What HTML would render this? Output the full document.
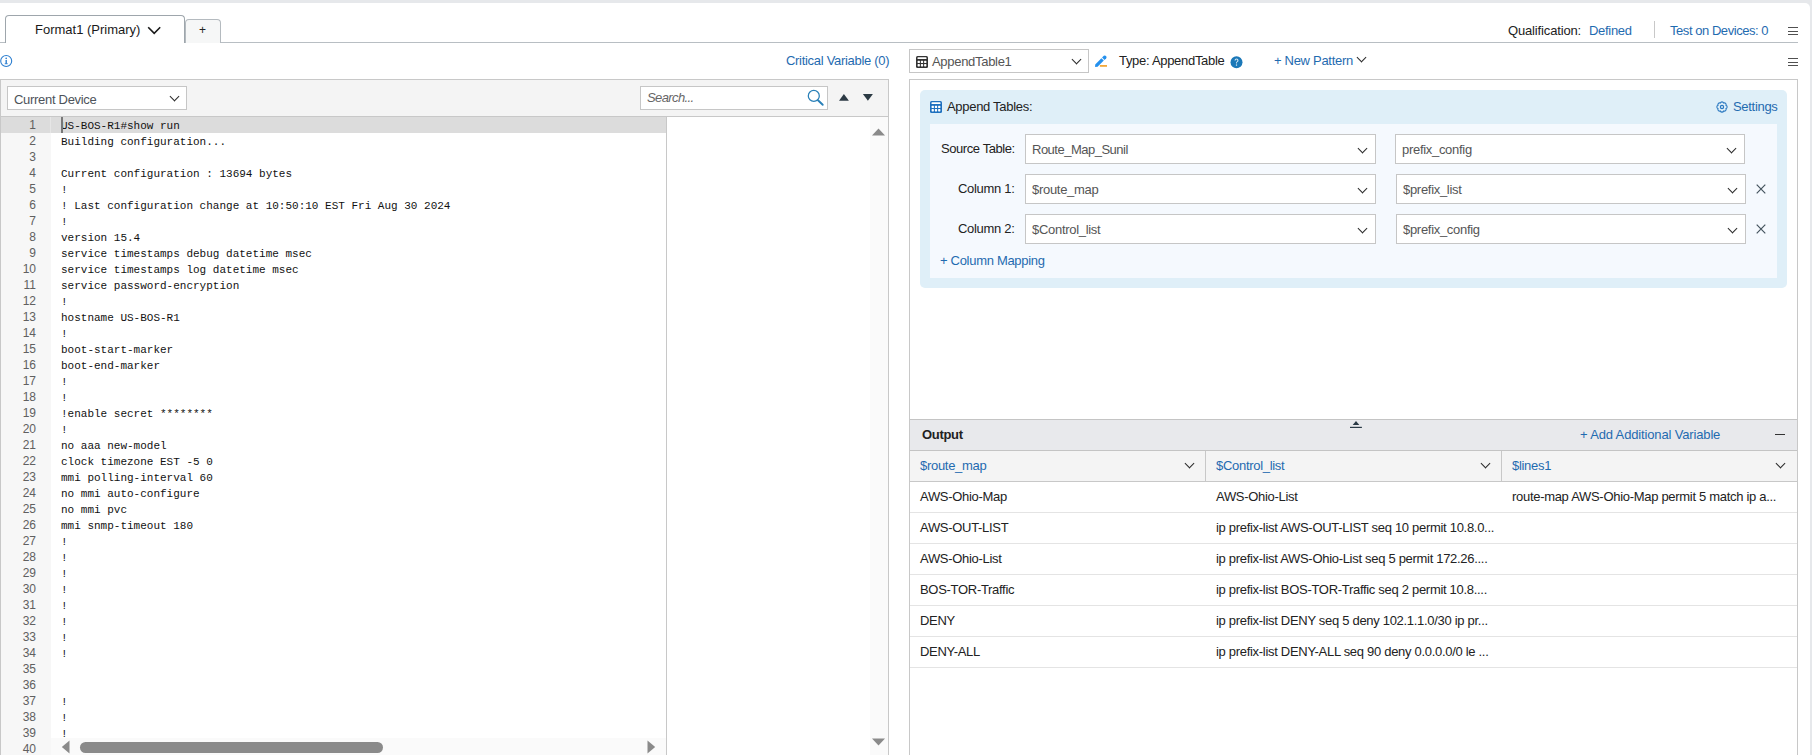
<!DOCTYPE html>
<html><head><meta charset="utf-8">
<style>
*{box-sizing:border-box;margin:0;padding:0}
html,body{width:1812px;height:755px;overflow:hidden;background:#e6e8eb;font-family:"Liberation Sans",sans-serif;font-size:13px;color:#222}
.abs{position:absolute}
.page{position:absolute;left:0;top:3px;width:1810px;height:760px;background:#fff;border-top-right-radius:5px}
.t{position:absolute;white-space:pre;line-height:16px;letter-spacing:-0.3px}
.blue{color:#1f6bb0}
.hl{position:absolute;background:#c9cdd1}
.box{position:absolute;background:#fff;border:1px solid #c6c6c6}
.chev{position:absolute;width:7px;height:7px;border-right:1.4px solid #333;border-bottom:1.4px solid #333;transform:rotate(45deg)}
.code{position:absolute;left:61px;top:117.5px;font-family:"Liberation Mono",monospace;font-size:11px;line-height:16px;color:#111;white-space:pre}
.gut{position:absolute;left:1px;top:117px;width:35px;font-family:"Liberation Sans",sans-serif;font-size:12px;line-height:16px;color:#606060;text-align:right;white-space:pre}
</style></head><body>
<div class="page"></div>

<!-- tabs -->
<div class="hl" style="left:0;top:42px;width:1798px;height:1px;background:#b8bec3"></div>
<div class="abs" style="left:5px;top:15px;width:180px;height:28px;background:#fff;border:1px solid #9ea6ac;border-bottom:none;border-radius:4px 4px 0 0"></div>
<div class="t" style="left:35px;top:22px;letter-spacing:0;color:#1a1a1a">Format1 (Primary)</div>
<svg class="abs" style="left:147px;top:26px" width="15" height="9" viewBox="0 0 15 9"><path d="M1.2 1.2 L7.2 7.4 L13.2 1.2" fill="none" stroke="#1a1a1a" stroke-width="1.6"/></svg>
<div class="abs" style="left:185px;top:19px;width:36px;height:24px;background:#f6f7f7;border:1px solid #b4babf;border-bottom:none;border-radius:4px 4px 0 0"></div>
<div class="t" style="left:199px;top:22px;font-size:12px;color:#222">+</div>

<div class="t" style="left:1508px;top:23px;letter-spacing:-0.15px">Qualification:</div>
<div class="t blue" style="left:1589px;top:23px">Defined</div>
<div class="hl" style="left:1654px;top:21px;width:1px;height:17px;background:#c8c8c8"></div>
<div class="t blue" style="left:1670px;top:23px;letter-spacing:-0.45px">Test on Devices: 0</div>
<div class="hl" style="left:1788px;top:27px;width:10px;height:1px;background:#505050"></div>
<div class="hl" style="left:1788px;top:30.5px;width:10px;height:1px;background:#505050"></div>
<div class="hl" style="left:1788px;top:34px;width:10px;height:1px;background:#505050"></div>

<!-- info icon -->
<svg class="abs" style="left:0;top:54px" width="14" height="14" viewBox="0 0 14 14"><circle cx="6.2" cy="7" r="5.5" fill="none" stroke="#2d7fd0" stroke-width="1.1"/><circle cx="6.2" cy="4.4" r="0.8" fill="#2d7fd0"/><rect x="5.5" y="6" width="1.4" height="3.8" fill="#2d7fd0"/><rect x="4.7" y="9.3" width="3" height="0.9" fill="#2d7fd0"/></svg>
<div class="t blue" style="left:786px;top:53px">Critical Variable (0)</div>

<!-- LEFT PANEL -->
<div class="abs" style="left:0;top:79px;width:889px;height:700px;border:1px solid #c8c8c8;background:#fff"></div>
<div class="abs" style="left:1px;top:80px;width:887px;height:37px;background:#f4f4f4;border-bottom:1px solid #c8c8c8"></div>

<!-- left toolbar -->
<div class="box" style="left:7px;top:86px;width:180px;height:24px"></div>
<div class="t" style="left:14px;top:92px;color:#4d535a">Current Device</div>
<div class="chev" style="left:171px;top:93px;width:7px;height:7px;border-width:1.5px;border-color:#2a2a2a"></div>
<div class="box" style="left:640px;top:86px;width:188px;height:24px"></div>
<div class="t" style="left:647px;top:90px;color:#666;font-style:italic;letter-spacing:-0.6px">Search...</div>
<svg class="abs" style="left:806px;top:89px" width="19" height="18" viewBox="0 0 19 18"><circle cx="7.8" cy="6.9" r="5.5" fill="none" stroke="#2a80b8" stroke-width="1.25"/><line x1="12" y1="11.2" x2="16.7" y2="15.8" stroke="#2a80b8" stroke-width="1.9" stroke-linecap="round"/></svg>
<svg class="abs" style="left:838px;top:93px" width="12" height="9" viewBox="0 0 12 9"><path d="M1 7.8 L5.9 1.1 L10.9 7.8Z" fill="#2c3a44"/></svg>
<svg class="abs" style="left:862px;top:93px" width="12" height="9" viewBox="0 0 12 9"><path d="M0.9 0.9 L5.9 7.8 L10.9 0.9Z" fill="#2c3a44"/></svg>

<!-- code editor -->
<div class="abs" style="left:1px;top:117px;width:50px;height:640px;background:#f7f7f7"></div>
<div class="abs" style="left:1px;top:117px;width:665px;height:16px;background:#dcdcdc"></div>
<div class="abs" style="left:50px;top:117px;width:1px;height:16px;background:#e6e6e6"></div>
<div class="abs" style="left:666px;top:117px;width:1px;height:640px;background:#c8c8c8"></div>
<div class="abs" style="left:870px;top:117px;width:18px;height:640px;background:#fafafa"></div>
<div class="gut">1
2
3
4
5
6
7
8
9
10
11
12
13
14
15
16
17
18
19
20
21
22
23
24
25
26
27
28
29
30
31
32
33
34
35
36
37
38
39
40</div>
<div class="code">US-BOS-R1#show run
Building configuration...

Current configuration : 13694 bytes
!
! Last configuration change at 10:50:10 EST Fri Aug 30 2024
!
version 15.4
service timestamps debug datetime msec
service timestamps log datetime msec
service password-encryption
!
hostname US-BOS-R1
!
boot-start-marker
boot-end-marker
!
!
!enable secret ********
!
no aaa new-model
clock timezone EST -5 0
mmi polling-interval 60
no mmi auto-configure
no mmi pvc
mmi snmp-timeout 180
!
!
!
!
!
!
!
!


!
!
!</div>
<div class="abs" style="left:61px;top:117px;width:2px;height:16px;background:#777"></div>
<svg class="abs" style="left:872px;top:128px" width="14" height="8" viewBox="0 0 14 8"><path d="M0 7.5 L6.5 0.5 L13 7.5Z" fill="#8a8a8a"/></svg>
<svg class="abs" style="left:872px;top:738px" width="14" height="8" viewBox="0 0 14 8"><path d="M0 0.5 L6.5 7.5 L13 0.5Z" fill="#8a8a8a"/></svg>
<div class="abs" style="left:51px;top:738px;width:615px;height:20px;background:#fafafa"></div>
<svg class="abs" style="left:61px;top:740px" width="9" height="15" viewBox="0 0 9 15"><path d="M8.5 0.5 L0.8 7 L8.5 13.5Z" fill="#8a8a8a"/></svg>
<svg class="abs" style="left:647px;top:740px" width="9" height="15" viewBox="0 0 9 15"><path d="M0.5 0.5 L8.2 7 L0.5 13.5Z" fill="#8a8a8a"/></svg>
<div class="abs" style="left:80px;top:742px;width:303px;height:11px;background:#8a8a8a;border-radius:6px"></div>

<!-- RIGHT PANEL top toolbar -->
<div class="box" style="left:909px;top:49px;width:180px;height:24px"></div>
<svg class="abs" style="left:916px;top:56px" width="12" height="12" viewBox="0 0 12 12"><rect x="0" y="0" width="12" height="12" rx="1.5" fill="#333"/><rect x="1.5" y="1.3" width="9" height="1.7" rx="0.6" fill="#fff"/><rect x="1.6" y="4.8" width="2.3" height="2.3" rx="0.6" fill="#fff"/><rect x="4.85" y="4.8" width="2.3" height="2.3" rx="0.6" fill="#fff"/><rect x="8.1" y="4.8" width="2.3" height="2.3" rx="0.6" fill="#fff"/><rect x="1.6" y="8.1" width="2.3" height="2.3" rx="0.6" fill="#fff"/><rect x="4.85" y="8.1" width="2.3" height="2.3" rx="0.6" fill="#fff"/><rect x="8.1" y="8.1" width="2.3" height="2.3" rx="0.6" fill="#fff"/></svg>
<div class="t" style="left:932px;top:54px;color:#555">AppendTable1</div>
<div class="chev" style="left:1073px;top:56px;width:7px;height:7px;border-width:1.5px;border-color:#2a2a2a"></div>
<svg class="abs" style="left:1094px;top:54px" width="14" height="14" viewBox="0 0 14 14"><path d="M1.1 12.9 L1.2 10.4 L7.4 4.2 L9.8 6.6 L3.6 12.8 Z" fill="#2490ee"/><path d="M8.1 3.5 L9.8 1.8 Q11 1 12.2 2.2 L12.2 2.2 Q13 3.3 12.2 4.2 L10.5 5.9 Z" fill="#2490ee"/><rect x="5.9" y="11" width="7.1" height="1.8" fill="#f2a93b"/></svg>
<div class="t" style="left:1119px;top:53px;color:#222">Type: AppendTable</div>
<svg class="abs" style="left:1229.5px;top:55.5px" width="13" height="13" viewBox="0 0 13 13"><circle cx="6.5" cy="6.3" r="6" fill="#1b78b8"/><path d="M4.5 4.6 Q4.6 2.6 6.5 2.6 Q8.5 2.6 8.5 4.4 Q8.5 5.5 7.4 6.1 Q6.9 6.5 6.9 7.4 L6 7.4 Q6 6.1 6.8 5.5 Q7.4 5 7.4 4.4 Q7.4 3.6 6.5 3.6 Q5.6 3.6 5.6 4.6 Z" fill="#d6e8f4"/><rect x="5.9" y="8.4" width="1.2" height="1.3" fill="#d6e8f4"/></svg>
<div class="t blue" style="left:1274px;top:53px">+ New Pattern</div>
<div class="chev" style="left:1358px;top:54px;width:7px;height:7px;border-width:1.5px;border-color:#2a2a2a"></div>
<div class="hl" style="left:1788px;top:58px;width:10px;height:1px;background:#505050"></div>
<div class="hl" style="left:1788px;top:61.5px;width:10px;height:1px;background:#505050"></div>
<div class="hl" style="left:1788px;top:65px;width:10px;height:1px;background:#505050"></div>

<div class="abs" style="left:909px;top:79px;width:889px;height:700px;border:1px solid #c8c8c8;background:#fff"></div>

<!-- append tables blue panel -->
<div class="abs" style="left:920px;top:90px;width:867px;height:198px;background:#dfeff8;border-radius:5px"></div>
<svg class="abs" style="left:930px;top:101px" width="12" height="12" viewBox="0 0 12 12"><rect x="0" y="0" width="12" height="12" rx="1.5" fill="#1e70bf"/><rect x="1.5" y="1.3" width="9" height="1.7" rx="0.6" fill="#fff"/><rect x="1.6" y="4.8" width="2.3" height="2.3" rx="0.6" fill="#fff"/><rect x="4.85" y="4.8" width="2.3" height="2.3" rx="0.6" fill="#fff"/><rect x="8.1" y="4.8" width="2.3" height="2.3" rx="0.6" fill="#fff"/><rect x="1.6" y="8.1" width="2.3" height="2.3" rx="0.6" fill="#fff"/><rect x="4.85" y="8.1" width="2.3" height="2.3" rx="0.6" fill="#fff"/><rect x="8.1" y="8.1" width="2.3" height="2.3" rx="0.6" fill="#fff"/></svg>
<div class="t" style="left:947px;top:99px;color:#222">Append Tables:</div>
<svg class="abs" style="left:1715px;top:100px" width="14" height="14" viewBox="0 0 14 14"><g fill="none" stroke="#2a78c0" stroke-width="1.1"><path d="M5.35 3.03 A1.75 1.75 0 0 1 8.65 3.03 A1.75 1.75 0 0 1 10.97 5.35 A1.75 1.75 0 0 1 10.97 8.65 A1.75 1.75 0 0 1 8.65 10.97 A1.75 1.75 0 0 1 5.35 10.97 A1.75 1.75 0 0 1 3.03 8.65 A1.75 1.75 0 0 1 3.03 5.35 A1.75 1.75 0 0 1 5.35 3.03 Z"/><circle cx="7" cy="7" r="1.6" stroke-width="1.2"/></g></svg>
<div class="t blue" style="left:1733px;top:99px">Settings</div>
<div class="abs" style="left:930px;top:124px;width:847px;height:154px;background:#f5f9fe"></div>

<div class="t" style="left:941px;top:141px;color:#222;letter-spacing:-0.42px">Source Table:</div>
<div class="box" style="left:1025px;top:134px;width:351px;height:30px"></div>
<div class="t" style="left:1032px;top:142px;color:#555;letter-spacing:-0.5px">Route_Map_Sunil</div>
<div class="chev" style="left:1359px;top:145px;width:7px;height:7px;border-width:1.5px;border-color:#2a2a2a"></div>
<div class="box" style="left:1395px;top:134px;width:350px;height:30px"></div>
<div class="t" style="left:1402px;top:142px;color:#555">prefix_config</div>
<div class="chev" style="left:1728px;top:145px;width:7px;height:7px;border-width:1.5px;border-color:#2a2a2a"></div>

<div class="t" style="left:958px;top:181px;color:#222">Column 1:</div>
<div class="box" style="left:1025px;top:174px;width:351px;height:30px"></div>
<div class="t" style="left:1032px;top:182px;color:#555">$route_map</div>
<div class="chev" style="left:1359px;top:185px;width:7px;height:7px;border-width:1.5px;border-color:#2a2a2a"></div>
<div class="box" style="left:1396px;top:174px;width:350px;height:30px"></div>
<div class="t" style="left:1403px;top:182px;color:#555">$prefix_list</div>
<div class="chev" style="left:1729px;top:185px;width:7px;height:7px;border-width:1.5px;border-color:#2a2a2a"></div>
<svg class="abs" style="left:1756px;top:184px" width="10" height="10" viewBox="0 0 10 10"><path d="M0.7 0.7 L9.3 9.3 M9.3 0.7 L0.7 9.3" stroke="#44535e" stroke-width="1.2"/></svg>

<div class="t" style="left:958px;top:221px;color:#222">Column 2:</div>
<div class="box" style="left:1025px;top:214px;width:351px;height:30px"></div>
<div class="t" style="left:1032px;top:222px;color:#555">$Control_list</div>
<div class="chev" style="left:1359px;top:225px;width:7px;height:7px;border-width:1.5px;border-color:#2a2a2a"></div>
<div class="box" style="left:1396px;top:214px;width:350px;height:30px"></div>
<div class="t" style="left:1403px;top:222px;color:#555">$prefix_config</div>
<div class="chev" style="left:1729px;top:225px;width:7px;height:7px;border-width:1.5px;border-color:#2a2a2a"></div>
<svg class="abs" style="left:1756px;top:224px" width="10" height="10" viewBox="0 0 10 10"><path d="M0.7 0.7 L9.3 9.3 M9.3 0.7 L0.7 9.3" stroke="#44535e" stroke-width="1.2"/></svg>

<div class="t blue" style="left:940px;top:253px">+ Column Mapping</div>

<!-- Output -->
<div class="abs" style="left:910px;top:419px;width:887px;height:32px;background:#e8e9ec;border-top:1px solid #c4c4c4;border-bottom:1px solid #c4c4c4"></div>
<svg class="abs" style="left:1349px;top:420px" width="14" height="9" viewBox="0 0 14 9"><path d="M3.7 4.9 L7 1 L10.3 4.9Z" fill="#2a3a46"/><rect x="1" y="6.8" width="11.9" height="1.2" fill="#2a3a46"/></svg>
<div class="t" style="left:922px;top:427px;font-weight:bold;color:#222">Output</div>
<div class="t blue" style="left:1580px;top:427px;letter-spacing:-0.15px">+ Add Additional Variable</div>
<div class="hl" style="left:1775px;top:434px;width:10px;height:1.3px;background:#333"></div>

<div class="abs" style="left:910px;top:451px;width:887px;height:31px;background:#f4f4f4;border-bottom:1px solid #c8c8c8"></div>
<div class="hl" style="left:1205px;top:451px;width:1px;height:30px;background:#c8c8c8"></div>
<div class="hl" style="left:1501px;top:451px;width:1px;height:30px;background:#c8c8c8"></div>
<div class="t blue" style="left:920px;top:458px">$route_map</div>
<div class="chev" style="left:1186px;top:460px;width:7px;height:7px;border-width:1.5px;border-color:#2a2a2a"></div>
<div class="t blue" style="left:1216px;top:458px">$Control_list</div>
<div class="chev" style="left:1482px;top:460px;width:7px;height:7px;border-width:1.5px;border-color:#2a2a2a"></div>
<div class="t blue" style="left:1512px;top:458px">$lines1</div>
<div class="chev" style="left:1777px;top:460px;width:7px;height:7px;border-width:1.5px;border-color:#2a2a2a"></div>
<div class="hl" style="left:910px;top:512px;width:887px;height:1px;background:#e4e4e4"></div>
<div class="t" style="left:920px;top:489px;color:#222">AWS-Ohio-Map</div>
<div class="t" style="left:1216px;top:489px;color:#222">AWS-Ohio-List</div>
<div class="t" style="left:1512px;top:489px;color:#222">route-map AWS-Ohio-Map permit 5 match ip a...</div>
<div class="hl" style="left:910px;top:543px;width:887px;height:1px;background:#e4e4e4"></div>
<div class="t" style="left:920px;top:520px;color:#222">AWS-OUT-LIST</div>
<div class="t" style="left:1216px;top:520px;color:#222">ip prefix-list AWS-OUT-LIST seq 10 permit 10.8.0...</div>
<div class="hl" style="left:910px;top:574px;width:887px;height:1px;background:#e4e4e4"></div>
<div class="t" style="left:920px;top:551px;color:#222">AWS-Ohio-List</div>
<div class="t" style="left:1216px;top:551px;color:#222">ip prefix-list AWS-Ohio-List seq 5 permit 172.26....</div>
<div class="hl" style="left:910px;top:605px;width:887px;height:1px;background:#e4e4e4"></div>
<div class="t" style="left:920px;top:582px;color:#222">BOS-TOR-Traffic</div>
<div class="t" style="left:1216px;top:582px;color:#222">ip prefix-list BOS-TOR-Traffic seq 2 permit 10.8....</div>
<div class="hl" style="left:910px;top:636px;width:887px;height:1px;background:#e4e4e4"></div>
<div class="t" style="left:920px;top:613px;color:#222">DENY</div>
<div class="t" style="left:1216px;top:613px;color:#222">ip prefix-list DENY seq 5 deny 102.1.1.0/30 ip pr...</div>
<div class="hl" style="left:910px;top:667px;width:887px;height:1px;background:#e4e4e4"></div>
<div class="t" style="left:920px;top:644px;color:#222">DENY-ALL</div>
<div class="t" style="left:1216px;top:644px;color:#222">ip prefix-list DENY-ALL seq 90 deny 0.0.0.0/0 le ...</div>
</body></html>
